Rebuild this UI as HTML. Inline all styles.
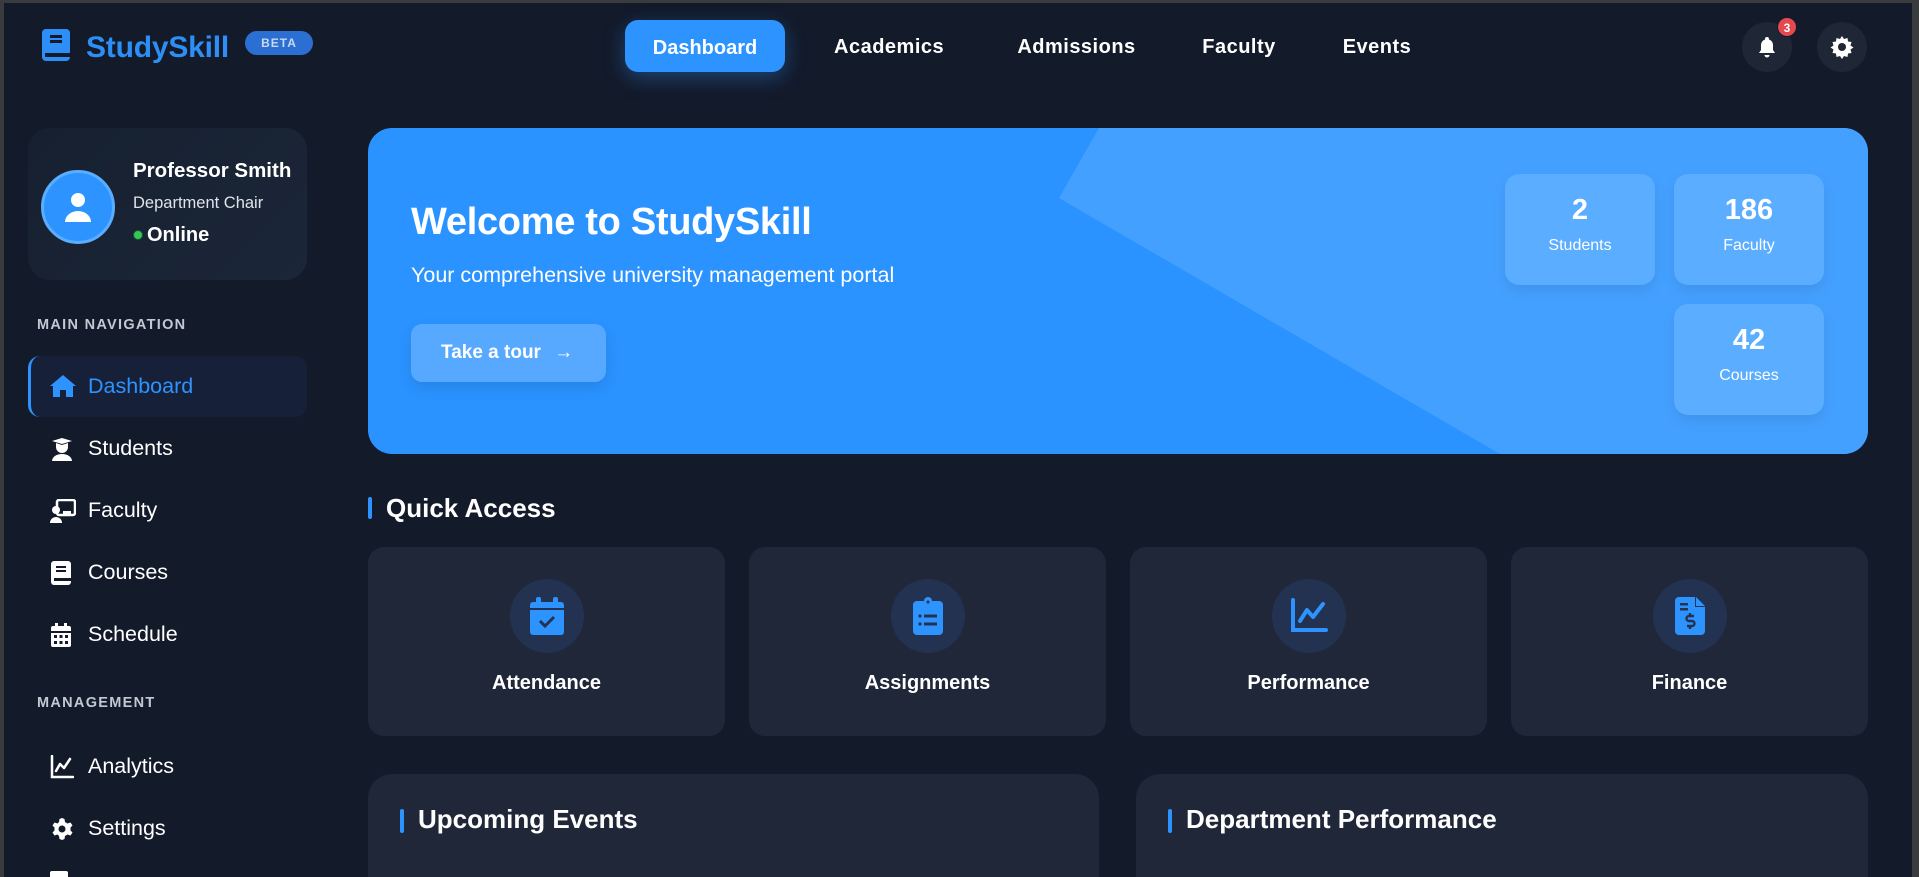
<!DOCTYPE html>
<html><head><meta charset="utf-8"><style>
*{box-sizing:border-box;margin:0;padding:0}
body{width:1919px;height:877px;overflow:hidden;background:#3a3b3d;font-family:"Liberation Sans",sans-serif;color:#fff;position:relative}
.app{position:absolute;left:4px;top:3px;width:1908px;height:874px;background:#131a2a;overflow:hidden}
.abs{position:absolute}
.logo{left:38px;top:26px;width:31px;height:32px}
.brand{left:82px;top:28px;font-size:30px;font-weight:bold;color:#2d8ff5;letter-spacing:-0.2px}
.beta{left:241px;top:28px;width:68px;height:24px;border-radius:12px;background:#2b6fd3;color:#c9d8f2;font-size:12px;font-weight:bold;text-align:center;line-height:24px;letter-spacing:1px}
.nav{top:17px;height:52px;line-height:52px;padding-top:1px;font-size:20px;font-weight:bold;color:#fff;text-align:center;white-space:nowrap}
.navact{left:621px;width:160px;background:#2d93ff;border-radius:13px;box-shadow:0 6px 20px rgba(45,147,255,.35);line-height:48px;padding-top:4px}
.circ{width:50px;height:50px;border-radius:25px;background:#1f2636}
.badge{width:20px;height:20px;border-radius:10px;background:#e5484d;font-size:12px;line-height:20px;text-align:center;font-weight:bold;border:1px solid #131a2a}
.profile{left:24px;top:125px;width:279px;height:152px;border-radius:22px;background:linear-gradient(135deg,#162030,#1b2638)}
.avatar{left:13px;top:42px;width:74px;height:74px;border-radius:37px;background:#2d93ff;border:3px solid #5aaeff}
.sec{font-size:14.5px;font-weight:bold;letter-spacing:1.3px;color:#c3c9d3;left:33px}
.item{left:24px;width:279px;height:61px;font-size:21.5px;line-height:61px;padding-left:60px;color:#fff}
.item svg{position:absolute;left:22px;top:19px}
.active{background:#172039;border-radius:12px;border-left:3px solid #2d93ff;color:#2d93ff;padding-left:57px}
.active svg{left:19px}
.hero{left:364px;top:125px;width:1500px;height:326px;border-radius:24px;background:#2a93ff;overflow:hidden}
.stat{width:150px;height:111px;border-radius:14px;background:#5aadff;box-shadow:0 6px 14px rgba(0,0,0,.08);text-align:center}
.stat b{display:block;font-size:29px;margin-top:20px}
.stat span{display:block;font-size:16px;margin-top:10px}
.card{top:544px;width:357px;height:189px;border-radius:16px;background:#1f2738;text-align:center}
.ic{width:74px;height:74px;border-radius:37px;background:#233251;margin:32px auto 0;display:flex;align-items:center;justify-content:center}
.card p{font-size:20px;font-weight:bold;margin-top:19px}
.panel{top:771px;height:200px;border-radius:24px;background:#1f2738}
.ptitle{top:30px;font-size:26px;font-weight:bold}
.bar{width:4px;border-radius:2px;background:#2d93ff}
</style></head><body><div class="app">
<svg class="abs logo" viewBox="0 0 31 32"><rect x="0" y="0" width="28" height="32" rx="4" fill="#2d8ff5"/><rect x="8" y="6" width="12" height="3" fill="#131a2a"/><rect x="8" y="11" width="12" height="3" fill="#131a2a"/><rect x="3" y="24" width="25" height="4" fill="#131a2a"/></svg>
<div class="abs brand">StudySkill</div>
<div class="abs beta">BETA</div>
<div class="abs nav navact">Dashboard</div>
<div class="abs nav" style="left:830px;width:110px;letter-spacing:0.5px">Academics</div>
<div class="abs nav" style="left:1010px;width:125px;letter-spacing:0.5px">Admissions</div>
<div class="abs nav" style="left:1190px;width:90px;letter-spacing:0.5px">Faculty</div>
<div class="abs nav" style="left:1333px;width:80px;letter-spacing:0.5px">Events</div>
<div class="abs circ" style="left:1738px;top:19px"><svg style="margin:13px" width="24" height="24" viewBox="0 0 24 24"><path d="M12 2a2 2 0 0 1 2 2v.5A6 6 0 0 1 18 10v5l2 3H4l2-3v-5a6 6 0 0 1 4-5.5V4a2 2 0 0 1 2-2zM9.5 20h5a2.5 2.5 0 0 1-5 0z" fill="#fff"/></svg></div>
<div class="abs badge" style="left:1773px;top:14px">3</div>
<div class="abs circ" style="left:1813px;top:19px"><svg style="margin:13px" width="24" height="24" viewBox="0 0 24 24"><path d="M12 1l2 3 3.5-1 .5 3.5 3.5.5-1 3.5 3 2-3 2 1 3.5-3.5.5-.5 3.5-3.5-1-2 3-2-3-3.5 1-.5-3.5-3.5-.5 1-3.5-3-2 3-2-1-3.5 3.5-.5.5-3.5 3.5 1z" fill="#fff"/><circle cx="12" cy="12" r="4" fill="#1f2636"/></svg></div>

<div class="abs profile">
<div class="abs avatar"><svg style="margin:18px" width="32" height="32" viewBox="0 0 32 32"><circle cx="16" cy="9" r="7" fill="#fff"/><path d="M3 31a13 11 0 0 1 26 0z" fill="#fff"/></svg></div>
<div class="abs" style="left:105px;top:31px;font-size:20.5px;font-weight:bold">Professor Smith</div>
<div class="abs" style="left:105px;top:66px;font-size:16.5px;color:#dfe3ea">Department Chair</div>
<div class="abs" style="left:105px;top:102px;width:10px;height:10px;border-radius:5px;background:#34c759;border:1px solid #1a5a30"></div>
<div class="abs" style="left:119px;top:96px;font-size:20px;font-weight:bold">Online</div>
</div>
<div class="abs sec" style="top:314px">MAIN NAVIGATION</div>
<div class="abs item active" style="top:353px"><svg width="26" height="22" viewBox="0 0 26 22"><path d="M13 0L0 11h3v11h7v-7h6v7h7V11h3z" fill="#2d93ff"/></svg>Dashboard</div>
<div class="abs item" style="top:415px"><svg width="24" height="24" viewBox="0 0 24 24"><path d="M2 4l10-3 10 3-10 3zM6 6v4a6 6 0 0 0 12 0V6l-6 2zM2 24a10 7 0 0 1 20 0z" fill="#fff"/></svg>Students</div>
<div class="abs item" style="top:477px"><svg width="26" height="24" viewBox="0 0 26 24"><rect x="7" y="1" width="18" height="15" rx="2" fill="none" stroke="#fff" stroke-width="2.5"/><circle cx="6" cy="11" r="4" fill="#fff"/><path d="M0 24a6 6 0 0 1 12 0z" fill="#fff"/><rect x="13" y="12" width="8" height="3" fill="#fff"/></svg>Faculty</div>
<div class="abs item" style="top:539px"><svg width="22" height="24" viewBox="0 0 22 24"><rect x="1" y="0" width="20" height="24" rx="3" fill="#fff"/><rect x="6" y="5" width="10" height="2" fill="#131a2a"/><rect x="6" y="9" width="10" height="2" fill="#131a2a"/><rect x="4" y="17" width="17" height="3" fill="#131a2a"/></svg>Courses</div>
<div class="abs item" style="top:601px"><svg width="22" height="24" viewBox="0 0 22 24"><rect x="1" y="3" width="20" height="21" rx="2" fill="#fff"/><rect x="5" y="0" width="3" height="5" fill="#fff"/><rect x="14" y="0" width="3" height="5" fill="#fff"/><rect x="1" y="8" width="20" height="2" fill="#131a2a"/><g fill="#131a2a"><rect x="4" y="12" width="3" height="3"/><rect x="9.5" y="12" width="3" height="3"/><rect x="15" y="12" width="3" height="3"/><rect x="4" y="18" width="3" height="3"/><rect x="9.5" y="18" width="3" height="3"/><rect x="15" y="18" width="3" height="3"/></g></svg>Schedule</div>
<div class="abs sec" style="top:692px">MANAGEMENT</div>
<div class="abs item" style="top:733px"><svg width="24" height="24" viewBox="0 0 24 24"><path d="M2 1v21h21" fill="none" stroke="#fff" stroke-width="2.5" stroke-linecap="round"/><path d="M6 16l4-7 4 4 6-9" fill="none" stroke="#fff" stroke-width="2.5" stroke-linejoin="round" stroke-linecap="round"/></svg>Analytics</div>
<div class="abs item" style="top:795px"><svg width="24" height="24" viewBox="0 0 24 24"><path d="M12 1l2.5 1 .5 3 2.5 1.5 3-1 2 3-2 2v3l2 2-2 3-3-1L15 19l-.5 3L12 23l-2.5-1-.5-3L7.5 17.5l-3 1-2-3 2-2v-3l-2-2 2-3 3 1L9 5l.5-3z" fill="#fff"/><circle cx="12" cy="12" r="3.5" fill="#131a2a"/></svg>Settings</div>
<div class="abs" style="left:46px;top:868px;width:18px;height:10px;background:#fff;border-radius:2px"></div>

<div class="abs hero">
<svg class="abs" style="left:0;top:0" width="1500" height="326"><polygon points="731,0 691,70 1132,326 1500,326 1500,0" fill="#44a0ff"/></svg>
<div class="abs" style="left:43px;top:73px;font-size:38px;font-weight:bold;letter-spacing:-0.3px">Welcome to StudySkill</div>
<div class="abs" style="left:43px;top:135px;font-size:21.5px">Your comprehensive university management portal</div>
<div class="abs" style="left:43px;top:196px;width:195px;height:58px;border-radius:11px;background:#56a9ff;box-shadow:0 6px 14px rgba(0,0,0,.1);font-size:19px;font-weight:bold;line-height:58px;padding-left:30px">Take a tour <span style="margin-left:8px">&#8594;</span></div>
<div class="abs stat" style="left:1137px;top:46px"><b>2</b><span>Students</span></div>
<div class="abs stat" style="left:1306px;top:46px"><b>186</b><span>Faculty</span></div>
<div class="abs stat" style="left:1306px;top:176px"><b>42</b><span>Courses</span></div>
</div>

<div class="abs bar" style="left:364px;top:494px;height:22px"></div>
<div class="abs" style="left:382px;top:490px;font-size:26px;font-weight:bold">Quick Access</div>
<div class="abs card" style="left:364px"><div class="ic"><svg width="34" height="38" viewBox="0 0 34 38"><rect x="0" y="5" width="34" height="33" rx="3" fill="#2d93ff"/><rect x="6" y="0" width="5" height="8" rx="2" fill="#2d93ff"/><rect x="23" y="0" width="5" height="8" rx="2" fill="#2d93ff"/><rect x="0" y="11" width="34" height="2" fill="#233251"/><path d="M10 24l5 5 9-9" fill="none" stroke="#233251" stroke-width="3"/></svg></div><p>Attendance</p></div>
<div class="abs card" style="left:745px"><div class="ic"><svg width="30" height="38" viewBox="0 0 30 38"><rect x="0" y="4" width="30" height="34" rx="4" fill="#2d93ff"/><circle cx="15" cy="4" r="4" fill="#2d93ff"/><circle cx="15" cy="5" r="1.5" fill="#233251"/><g fill="#233251"><circle cx="7" cy="19" r="1.6"/><circle cx="7" cy="27" r="1.6"/><rect x="11" y="17.5" width="13" height="3"/><rect x="11" y="25.5" width="13" height="3"/></g></svg></div><p>Assignments</p></div>
<div class="abs card" style="left:1126px"><div class="ic"><svg width="38" height="36" viewBox="0 0 38 36"><path d="M3 2v30h33" fill="none" stroke="#2d93ff" stroke-width="4" stroke-linecap="round"/><path d="M10 23l7-11 6 7 10-13" fill="none" stroke="#2d93ff" stroke-width="4" stroke-linejoin="round" stroke-linecap="round"/></svg></div><p>Performance</p></div>
<div class="abs card" style="left:1507px"><div class="ic"><svg width="30" height="38" viewBox="0 0 30 38"><path d="M4 0h16l10 10v24a4 4 0 0 1-4 4H4a4 4 0 0 1-4-4V4a4 4 0 0 1 4-4z" fill="#2d93ff"/><path d="M20 0v10h10" fill="#233251"/><path d="M21 0v9h9" fill="#2d93ff"/><g fill="#233251"><rect x="5" y="6" width="8" height="2.5"/><rect x="5" y="11" width="8" height="2.5"/></g><path d="M19 19h-5a2.5 2.5 0 0 0 0 5h3a2.5 2.5 0 0 1 0 5h-5M15 16v3M15 29v3" fill="none" stroke="#233251" stroke-width="2.4"/></svg></div><p>Finance</p></div>

<div class="abs panel" style="left:364px;width:731px"><div class="abs bar" style="left:32px;top:35px;height:24px"></div><div class="abs ptitle" style="left:50px">Upcoming Events</div></div>
<div class="abs panel" style="left:1132px;width:732px"><div class="abs bar" style="left:32px;top:35px;height:24px"></div><div class="abs ptitle" style="left:50px">Department Performance</div></div>
</div></body></html>
